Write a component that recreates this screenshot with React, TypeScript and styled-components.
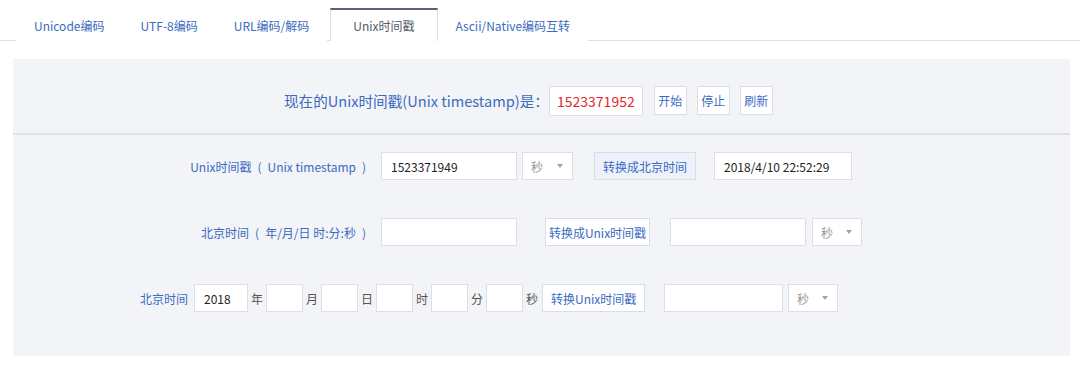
import React from "react";
import styled, { createGlobalStyle } from "styled-components";

const GlobalStyle = createGlobalStyle`
  body {
    margin: 0;
    background: #fff;
    font-family: "Noto Sans CJK SC", "Noto Sans", sans-serif;
  }
`;

const Page = styled.div`
  width: 1080px;
  height: 370px;
  overflow: hidden;
  background: #fff;
`;

const TabBar = styled.div`
  height: 40px;
  display: flex;
  align-items: flex-end;
  padding-left: 16px;
  border-bottom: 1px solid #dcdfe6;
`;

const Tab = styled.div<{ $active?: boolean }>`
  height: ${(p) => (p.$active ? "31px" : "32px")};
  margin: 0 ${(p) => (p.$active ? "0 0 3px" : "0")};
  margin-bottom: -1px;
  padding: 0 ${(p) => (p.$active ? "22px" : "17px")};
  display: flex;
  align-items: center;
  font-size: 12px;
  color: ${(p) => (p.$active ? "#555a66" : "#3a6bc1")};
  background: #fff;
  border: 1px solid ${(p) => (p.$active ? "#dcdfe6" : "transparent")};
  border-top: ${(p) => (p.$active ? "2px solid #5c6275" : "1px solid transparent")};
  border-bottom: none;
  white-space: nowrap;
`;

const Panel = styled.div`
  margin: 18px 10px 0 13px;
  height: 297px;
  background: #f3f4f8;
`;

const Header = styled.div`
  height: 76px;
  box-sizing: border-box;
  padding: 27px 0 0 271px;
  border-bottom: 2px solid #dfe1e7;
  display: flex;
  align-items: flex-start;
`;

const HeaderText = styled.span`
  font-size: 14.6px;
  color: #3a6bc1;
  line-height: 30px;
  white-space: nowrap;
`;

const NowBox = styled.div`
  width: 94px;
  height: 30px;
  box-sizing: border-box;
  background: #fff;
  border: 1px solid #dcdfe6;
  color: #e3262b;
  font-size: 14px;
  display: flex;
  align-items: center;
  justify-content: center;
`;

const SmallButton = styled.div<{ $gap?: number }>`
  width: 33px;
  height: 29px;
  box-sizing: border-box;
  margin-left: ${(p) => p.$gap ?? 10}px;
  background: #fff;
  border: 1px solid #d8dde6;
  color: #3a6bc1;
  font-size: 12px;
  display: flex;
  align-items: center;
  justify-content: center;
`;

const Body = styled.div`
  padding-top: 17px;
  display: flex;
  flex-direction: column;
  gap: 38px;
`;

const Row = styled.div<{ $indent?: number }>`
  height: 28px;
  display: flex;
  align-items: center;
  padding-left: ${(p) => p.$indent ?? 0}px;
`;

const Label = styled.span<{ $width?: number }>`
  width: ${(p) => (p.$width ? `${p.$width}px` : "auto")};
  text-align: right;
  font-size: 12px;
  color: #3a6bc1;
  white-space: pre;
`;

const Field = styled.div<{ $width: number; $gap?: number }>`
  width: ${(p) => p.$width}px;
  height: 28px;
  box-sizing: border-box;
  margin-left: ${(p) => p.$gap ?? 0}px;
  padding: 0 9px;
  background: #fff;
  border: 1px solid #dcdfe6;
  color: #222;
  font-size: 12px;
  display: flex;
  align-items: center;
  white-space: nowrap;
`;

const Select = styled(Field)`
  justify-content: space-between;
  padding: 0 9px 0 8px;
  color: #999;
`;

const Caret = styled.span`
  width: 0;
  height: 0;
  border-left: 3.5px solid transparent;
  border-right: 3.5px solid transparent;
  border-top: 4px solid #a0a4ab;
`;

const ActionButton = styled.div<{ $width: number; $gap: number; $tint?: boolean }>`
  width: ${(p) => p.$width}px;
  height: 28px;
  box-sizing: border-box;
  margin-left: ${(p) => p.$gap}px;
  background: ${(p) => (p.$tint ? "#edf2fa" : "#fff")};
  border: 1px solid #d8dee8;
  color: #3a6bc1;
  font-size: 12px;
  display: flex;
  align-items: center;
  justify-content: center;
  white-space: nowrap;
`;

const Unit = styled.span`
  font-size: 12px;
  color: #555;
  margin: 0 3px;
`;

const tabs = ["Unicode编码", "UTF-8编码", "URL编码/解码", "Unix时间戳", "Ascii/Native编码互转"];

function UnitSelect({ width, gap }: { width: number; gap: number }) {
  return (
    <Select $width={width} $gap={gap}>
      <span>秒</span>
      <Caret />
    </Select>
  );
}

export default function App() {
  const parts = ["年", "月", "日", "时", "分"];
  return (
    <Page>
      <GlobalStyle />
      <TabBar>
        {tabs.map((t) => (
          <Tab key={t} $active={t === "Unix时间戳"}>
            {t}
          </Tab>
        ))}
      </TabBar>
      <Panel>
        <Header>
          <HeaderText>现在的Unix时间戳(Unix timestamp)是：</HeaderText>
          <NowBox>1523371952</NowBox>
          <SmallButton $gap={11}>开始</SmallButton>
          <SmallButton>停止</SmallButton>
          <SmallButton>刷新</SmallButton>
        </Header>
        <Body>
          <Row>
            <Label $width={353}>{"Unix时间戳\u2002(\u2002Unix timestamp\u2002)"}</Label>
            <Field $width={136} $gap={15}>1523371949</Field>
            <UnitSelect width={51} gap={5} />
            <ActionButton $width={102} $gap={21} $tint>
              转换成北京时间
            </ActionButton>
            <Field $width={138} $gap={18}>2018/4/10 22:52:29</Field>
          </Row>
          <Row>
            <Label $width={353}>{"北京时间\u2002(\u2002年/月/日 时:分:秒\u2002)"}</Label>
            <Field $width={136} $gap={15} />
            <ActionButton $width={105} $gap={28}>
              转换成Unix时间戳
            </ActionButton>
            <Field $width={136} $gap={20} />
            <UnitSelect width={50} gap={6} />
          </Row>
          <Row $indent={127}>
            <Label>北京时间</Label>
            <Field $width={54} $gap={6}>2018</Field>
            {parts.map((p) => (
              <React.Fragment key={p}>
                <Unit>{p}</Unit>
                <Field $width={37} />
              </React.Fragment>
            ))}
            <Unit>秒</Unit>
            <ActionButton $width={103} $gap={1}>
              转换Unix时间戳
            </ActionButton>
            <Field $width={119} $gap={19} />
            <UnitSelect width={50} gap={5} />
          </Row>
        </Body>
      </Panel>
    </Page>
  );
}
